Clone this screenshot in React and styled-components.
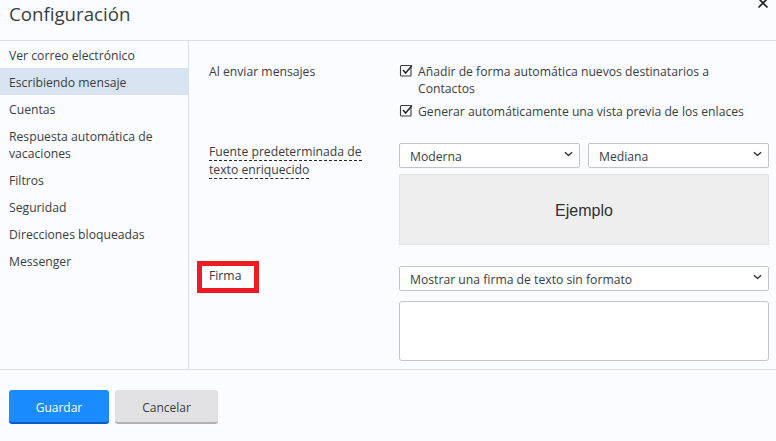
import React from 'react'
import styled, { createGlobalStyle } from 'styled-components'

const GlobalStyle = createGlobalStyle`
  html, body {
    margin: 0;
    padding: 0;
    background: #fbfcff;
  }
  * {
    box-sizing: border-box;
  }
`

const menuItems = [
  'Ver correo electrónico',
  'Escribiendo mensaje',
  'Cuentas',
  'Respuesta automática de vacaciones',
  'Filtros',
  'Seguridad',
  'Direcciones bloqueadas',
  'Messenger'
]

function Chevron() {
  return (
    <ChevronIcon viewBox="0 0 10 6" aria-hidden="true">
      <path d="M1 1l4 3.6L9 1" fill="none" stroke="#26282a" strokeWidth="1.5" />
    </ChevronIcon>
  )
}

function Check({ children }) {
  return (
    <CheckRow>
      <svg width="15" height="15" viewBox="0 0 15 15" aria-hidden="true">
        <rect x="1.5" y="2.5" width="10.5" height="10.5" rx="1" fill="none" stroke="#3a3d40" strokeWidth="1.1" />
        <path d="M4 7l2.6 3L13 2.6" fill="none" stroke="#26282a" strokeWidth="1.5" />
      </svg>
      <span>{children}</span>
    </CheckRow>
  )
}

export default function App() {
  return (
    <Dialog>
      <GlobalStyle />
      <Header>
        <Title>Configuración</Title>
        <CloseIcon viewBox="0 0 12 12" aria-label="cerrar">
          <path d="M1.5 1.5l9 9M10.5 1.5l-9 9" stroke="#1c1e20" strokeWidth="1.6" />
        </CloseIcon>
      </Header>

      <Body>
        <Sidebar>
          {menuItems.map(item => (
            <MenuItem key={item} $active={item === 'Escribiendo mensaje'}>
              {item}
            </MenuItem>
          ))}
        </Sidebar>

        <Main>
          <Section $gap={23}>
            <Label $top={1}>Al enviar mensajes</Label>
            <Checks>
              <Check>Añadir de forma automática nuevos destinatarios a Contactos</Check>
              <Check>Generar automáticamente una vista previa de los enlaces</Check>
            </Checks>
          </Section>

          <Section $gap={21}>
            <Label>
              <Dashed>Fuente predeterminada de texto enriquecido</Dashed>
            </Label>
            <Controls $gap={6}>
              <SelectRow>
                <Select>Moderna<Chevron /></Select>
                <Select>Mediana<Chevron /></Select>
              </SelectRow>
              <Preview>Ejemplo</Preview>
            </Controls>
          </Section>

          <Section>
            <Label $top={1}>
              Firma
              <Highlight />
            </Label>
            <Controls $gap={10}>
              <Select>Mostrar una firma de texto sin formato<Chevron /></Select>
              <SignatureBox />
            </Controls>
          </Section>
        </Main>
      </Body>

      <Footer>
        <PrimaryButton>Guardar</PrimaryButton>
        <SecondaryButton>Cancelar</SecondaryButton>
      </Footer>
    </Dialog>
  )
}

const Dialog = styled.div`
  width: 776px;
  height: 441px;
  overflow: hidden;
  display: flex;
  flex-direction: column;
  background: #fbfcff;
  color: #33363a;
  font-family: 'Open Sans', 'Noto Sans', sans-serif;
  font-size: 12.2px;
`

const Header = styled.header`
  height: 41px;
  flex: none;
  display: flex;
  justify-content: space-between;
  padding: 0 7px 0 9px;
  border-bottom: 1px solid #d8dfe8;
`

const Title = styled.h1`
  margin: 1px 0 0;
  font-size: 18.7px;
  line-height: 26px;
  font-weight: 400;
  color: #3a3d41;
`

const CloseIcon = styled.svg`
  width: 12px;
  height: 12px;
  margin-top: -3px;
`

const Body = styled.div`
  height: 328px;
  flex: none;
  display: flex;
`

const Sidebar = styled.nav`
  width: 189px;
  flex: none;
  border-right: 1px solid #d8dfe8;
`

const MenuItem = styled.div`
  padding: 6px 9px 4px;
  line-height: 17px;
  color: #3a3d41;
  background: ${({ $active }) => ($active ? '#d8e3f1' : 'transparent')};
`

const Main = styled.main`
  flex: 1;
  padding: 21px 7px 0 20px;
`

const Section = styled.section`
  display: grid;
  grid-template-columns: 190px 370px;
  margin-bottom: ${({ $gap }) => $gap || 0}px;
`

const Label = styled.div`
  position: relative;
  width: 160px;
  padding-top: ${({ $top }) => $top || 0}px;
  line-height: 18px;
  color: #3a3d41;
`

const Dashed = styled.span`
  border-bottom: 1px dashed #26282a;
`

const Highlight = styled.span`
  position: absolute;
  left: -12px;
  top: -5px;
  width: 62px;
  height: 32px;
  border: 5px solid #ed1c24;
`

const Checks = styled.div`
  display: flex;
  flex-direction: column;
  gap: 5px;
`

const CheckRow = styled.label`
  display: flex;
  gap: 4px;
  padding-top: 1px;
  line-height: 17px;
  color: #3a3d41;

  span {
    max-width: 328px;
  }

  svg {
    flex: none;
  }
`

const Controls = styled.div`
  display: flex;
  flex-direction: column;
  gap: ${({ $gap }) => $gap}px;
`

const SelectRow = styled.div`
  display: grid;
  grid-template-columns: 181px 181px;
  gap: 8px;
`

const Select = styled.div`
  height: 25px;
  display: flex;
  align-items: center;
  justify-content: space-between;
  padding: 1px 6px 0 10px;
  background: #fff;
  border: 1px solid #c3c5c9;
  border-radius: 2px;
  color: #3a3d41;
`

const ChevronIcon = styled.svg`
  width: 9px;
  height: 6px;
  margin-top: -5px;
`

const Preview = styled.div`
  height: 71px;
  display: flex;
  align-items: center;
  justify-content: center;
  padding-top: 2px;
  background: #eeeeee;
  border: 1px solid #e3e3e3;
  font-family: 'Liberation Sans', Arial, sans-serif;
  font-size: 16px;
  color: #2e3033;
`

const SignatureBox = styled.div`
  height: 60px;
  background: #fff;
  border: 1px solid #c3c5c9;
  border-radius: 3px;
`

const Footer = styled.footer`
  flex: 1;
  display: flex;
  gap: 6px;
  padding: 20px 0 0 9px;
  border-top: 1px solid #d8dfe8;
  font-size: 12px;
`

const PrimaryButton = styled.button`
  width: 100px;
  height: 34px;
  padding: 2px 0 0;
  border: 0;
  border-bottom: 2px solid #0a5bc4;
  border-radius: 3px;
  background: #1a8cff;
  color: #fff;
  font: inherit;
`

const SecondaryButton = styled.button`
  width: 103px;
  height: 34px;
  padding: 2px 0 0;
  border: 0;
  border-bottom: 2px solid #b0b1b5;
  border-radius: 3px;
  background: #e1e1e4;
  color: #3a3d41;
  font: inherit;
`
